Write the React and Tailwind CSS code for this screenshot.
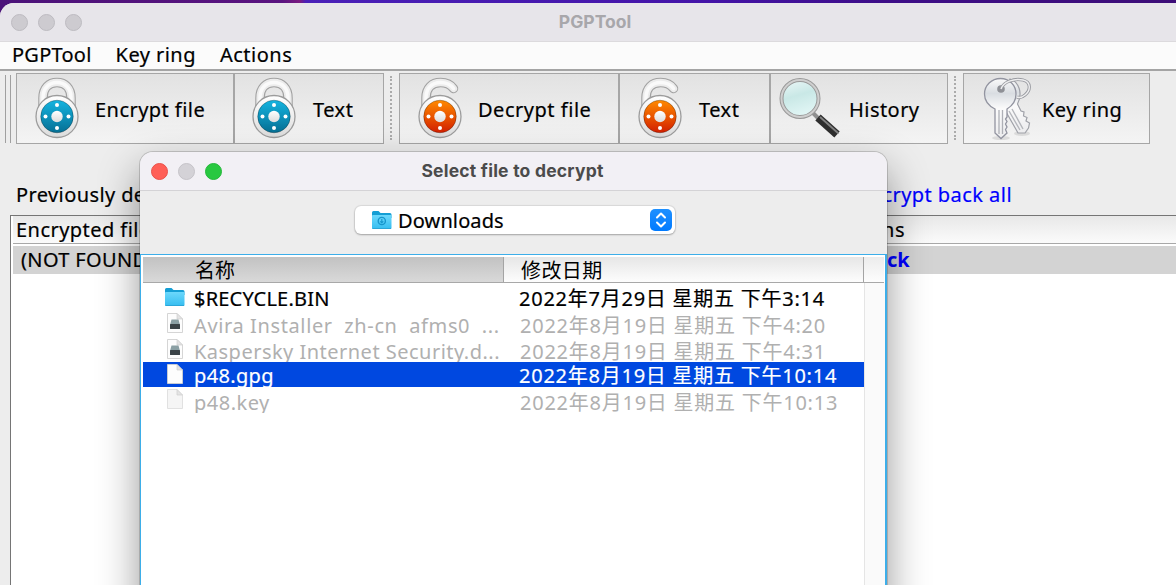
import React from "react";

const LABEL = "whitespace-pre font-['Noto_Sans','Noto_Sans_CJK_SC',sans-serif] text-[20px]";
const HEAVY = "[-webkit-text-stroke:0.2px_currentColor]";

const CLOSED = "M10 36V22C10 12 16 6.500 24 6.500C32 6.500 38 12 38 22V36";
const OPEN = "M10 36V22C10 12 16 6.500 24.500 6.500C31 6.500 35 9 37.500 12.500";

function Padlock({ id, open, top, bottom }) {
  return (
    <svg width="48" height="64" viewBox="0 0 48 64" className="-mt-[1px] shrink-0">
      <defs>
        <linearGradient id={id} x1="0" y1="0" x2="0" y2="1">
          <stop offset="0" stopColor={top} />
          <stop offset="1" stopColor={bottom} />
        </linearGradient>
        <linearGradient id={id + "m"} x1="0" y1="0" x2="0" y2="1">
          <stop offset="0" stopColor="#ffffff" />
          <stop offset="1" stopColor="#dcdcdc" />
        </linearGradient>
      </defs>
      <path d={open ? OPEN : CLOSED} fill="none" stroke="#a2a2a2" strokeWidth="9.500" strokeLinecap="round" />
      <path d={open ? OPEN : CLOSED} fill="none" stroke="#ececec" strokeWidth="7.300" strokeLinecap="round" />
      <path d={open ? OPEN : CLOSED} fill="none" stroke="#fafafa" strokeWidth="3.500" strokeLinecap="round" />
      <circle cx="24" cy="40.500" r="21" fill={`url(#${id}m)`} stroke="#9c9c9c" strokeWidth="1.300" />
      <circle cx="24" cy="40.500" r="16.300" fill={`url(#${id})`} stroke="#00000055" strokeWidth="0.800" />
      <circle cx="24" cy="40.500" r="5.700" fill={`url(#${id}m)`} />
      <circle cx="24" cy="29" r="2" fill="#fff" />
      <circle cx="24" cy="52" r="2" fill="#fff" />
      <circle cx="12.500" cy="40.500" r="2" fill="#fff" />
      <circle cx="35.500" cy="40.500" r="2" fill="#fff" />
    </svg>
  );
}

function Magnifier() {
  return (
    <svg width="64" height="64" viewBox="0 0 64 64" className="shrink-0">
      <defs>
        <linearGradient id="lens" x1="0" y1="0" x2="0.300" y2="1">
          <stop offset="0" stopColor="#edf8f8" />
          <stop offset="0.500" stopColor="#c9e8e6" />
          <stop offset="1" stopColor="#e0f5f4" />
        </linearGradient>
      </defs>
      <path d="M35 36L42 43" stroke="#8f8f8f" strokeWidth="4" />
      <path d="M40 40.500L59 57.500" stroke="#2e2e2e" strokeWidth="8" />
      <path d="M42 40L60.500 56.500" stroke="#828282" strokeWidth="1.800" />
      <circle cx="22" cy="21.500" r="18.500" fill="url(#lens)" stroke="#999" strokeWidth="4" />
      <circle cx="22" cy="21.500" r="18.500" fill="none" stroke="#cfcfcf" strokeWidth="2" />
    </svg>
  );
}

function Keys() {
  return (
    <svg width="56" height="66" viewBox="0 0 56 66" className="mt-px shrink-0">
      <defs>
        <linearGradient id="steel" x1="0" y1="0" x2="0" y2="1">
          <stop offset="0" stopColor="#fafafa" />
          <stop offset="0.250" stopColor="#d9dde2" />
          <stop offset="0.500" stopColor="#fbfbfb" />
          <stop offset="1" stopColor="#ececee" />
        </linearGradient>
      </defs>
      <ellipse cx="21" cy="62" rx="9" ry="2" fill="#00000018" />
      <ellipse cx="42" cy="57.500" rx="8" ry="2.500" fill="#00000018" />
      <path d="M30 3C39 6 43 17 37.500 28L41 35L44 36L43.500 40L47 41.500L46 45L49.500 47L48.500 52L45 57H38L25 34V20Z" fill="url(#steel)" stroke="#9fa1a8" strokeWidth="1.200" />
      <path d="M29 35L40 54M32 33L43 53" stroke="#b4b6bb" strokeWidth="1.400" />
      <path d="M20.500 2.500C29.500 2.500 36 9.500 36 18C36 25 32 30 27 33V41L25.500 43L27 45.500L25.500 48L27 51L25.500 53.500L27 57L21 62.500L15 57V33C9 30 4.500 25 4.500 18C4.500 9.500 11.500 2.500 20.500 2.500Z" fill="url(#steel)" stroke="#9294a0" strokeWidth="1.300" />
      <path d="M19 34V58M22.500 34V58" stroke="#aeb0b6" strokeWidth="1.300" />
      <circle cx="21" cy="13" r="3.800" fill="#8e9096" />
      <path d="M21 13C23 6 34 2 43 4C51 6 51 14 45 19C42 21.500 39 22 37 21" fill="none" stroke="#989aa0" strokeWidth="3.200" />
      <path d="M21 13C23 6 34 2 43 4C51 6 51 14 45 19C42 21.500 39 22 37 21" fill="none" stroke="#eeeeef" strokeWidth="1.400" />
    </svg>
  );
}

function FolderIcon({ id, download }) {
  return (
    <svg width="22" height="20" viewBox="0 0 22 20" className="shrink-0">
      <defs>
        <linearGradient id={id} x1="0" y1="0" x2="0" y2="1">
          <stop offset="0" stopColor="#6cd8fc" />
          <stop offset="1" stopColor="#35bdf0" />
        </linearGradient>
      </defs>
      <path d="M1 2.500Q1 1 2.500 1H7.500L9.500 3H19Q20.500 3 20.500 4.500V8H1Z" fill="#149ed4" />
      <rect x="1" y="5" width="19.500" height="14" rx="1" fill={`url(#${id})`} />
      <path d="M1.500 18.500H20" stroke="#2ba6d8" />
      {download && (
        <g fill="none" stroke="#1796cc" strokeWidth="1.400">
          <circle cx="10.800" cy="11" r="3.600" />
          <path d="M10.800 9V12.500M9.300 11.300L10.800 12.800L12.300 11.300" strokeWidth="1.100" />
        </g>
      )}
    </svg>
  );
}

function FileIcon({ drive, dim }) {
  return (
    <svg width="18" height="20" viewBox="0 0 18 20" className="shrink-0">
      <path d="M1.500 0.500H11L16.500 6V19.500H1.500Z" fill={dim ? "#f5f5f5" : "#fdfdfd"} stroke={dim ? "#dedede" : "#d0d0d0"} strokeWidth="0.900" />
      <path d="M11 0.500V6H16.500Z" fill="#e4e4e4" stroke="#cfcfcf" strokeWidth="0.700" />
      {drive && (
        <g>
          <path d="M5.500 6.500H12.500L14 12H4Z" fill="#8ba0a4" />
          <rect x="4" y="11" width="10" height="5" rx="0.500" fill="#3a4347" />
        </g>
      )}
    </svg>
  );
}

function ToolButton({ icon, label, className, gap, tracking = "tracking-[0.45px]" }) {
  return (
    <div className={`flex h-[71px] shrink-0 items-center border border-[#a6a6a6] bg-linear-to-b from-[#e2e2e2] to-[#f4f4f4] ${className}`}>
      {icon}
      <span className={`${LABEL} ${HEAVY} pt-[2px] text-black ${gap} ${tracking}`}>{label}</span>
    </div>
  );
}

const files = [
  { name: "$RECYCLE.BIN", date: "2022年7月29日 星期五 下午3:14", kind: "folder", row: "h-[26px]", line: "leading-[28px]", track: "tracking-[0.2px]" },
  { name: "Avira Installer  zh-cn  afms0  ...", date: "2022年8月19日 星期五 下午4:20", kind: "drive", dim: true, row: "h-[26px]", line: "leading-[30px]", track: "tracking-[0.62px]" },
  { name: "Kaspersky Internet Security.d...", date: "2022年8月19日 星期五 下午4:31", kind: "drive", dim: true, row: "h-[25px]", line: "leading-[30px]", track: "tracking-[0.48px]" },
  { name: "p48.gpg", date: "2022年8月19日 星期五 下午10:14", kind: "file", selected: true, row: "h-[25px]", line: "leading-[28px]", track: "tracking-[0.35px]" },
  { name: "p48.key", date: "2022年8月19日 星期五 下午10:13", kind: "file", dim: true, row: "h-[26px]", line: "leading-[32px]", track: "tracking-[0.5px]" },
];

function FileRow({ f }) {
  const color = f.selected ? `text-white ${HEAVY}` : f.dim ? "text-[#b0b0b0]" : `text-black ${HEAVY}`;
  return (
    <div className={`flex w-[721px] overflow-hidden ${f.row} ${f.selected ? "bg-[#0048e0]" : ""}`}>
      <div className={`flex w-[360px] pl-[21px] ${f.dim ? "gap-[8px]" : "gap-[8px]"}`}>
        <div className="flex w-[22px] justify-center pt-[2px]">
          {f.kind === "folder" ? <FolderIcon id="rec" /> : <FileIcon drive={f.kind === "drive"} dim={f.dim && f.kind === "file"} />}
        </div>
        <span className={`${LABEL} ${color} ${f.track} ${f.line}`}>{f.name}</span>
      </div>
      <span className={`${LABEL} ${color} tracking-[0.75px] ${f.dim ? "pl-[17px]" : "pl-[16px]"} ${f.line}`}>{f.date}</span>
    </div>
  );
}

function Dialog() {
  return (
    <div className="absolute top-[152px] left-[140px] flex h-[460px] w-[747px] flex-col overflow-hidden rounded-t-[13px] bg-[#ededed] shadow-[0_0_0_1px_rgba(0,0,0,0.16),0_18px_42px_rgba(0,0,0,0.42)]">
      <div className="grid h-[39px] shrink-0 grid-cols-[1fr_auto_1fr] items-center border-b border-[#d4d3d6] bg-[#f2f0f5]">
        <div className="flex gap-[10px] pl-[11px]">
          <i className="h-[17px] w-[17px] rounded-full border border-[#e8504a] bg-[#ff5f57]" />
          <i className="h-[17px] w-[17px] rounded-full border border-[#c5c3c8] bg-[#d4d2d7]" />
          <i className="h-[17px] w-[17px] rounded-full border border-[#24b83b] bg-[#28c840]" />
        </div>
        <span className="-ml-[2px] font-[Inter,sans-serif] text-[17.500px] font-bold tracking-[0.22px] text-[#4b4b4b]">Select file to decrypt</span>
      </div>
      <div className="flex h-[63px] shrink-0 justify-center pt-[15px] pl-[3px]">
        <div className="flex h-[28px] w-[320px] items-center rounded-[6px] bg-white pr-[3px] pl-[16px] shadow-[0_0_1px_1px_rgba(0,0,0,0.08),0_1px_2px_rgba(0,0,0,0.25)]">
          <FolderIcon id="dl" download />
          <span className={`${LABEL} ${HEAVY} ml-[5px] flex-1 pt-px tracking-[0.12px] text-black`}>Downloads</span>
          <span className="flex h-[22px] w-[22px] items-center justify-center rounded-[5px] bg-linear-to-b from-[#1e90ff] to-[#007aff]">
            <svg width="12" height="16" viewBox="0 0 12 16" fill="none" stroke="#fff" strokeWidth="2" strokeLinecap="round" strokeLinejoin="round">
              <path d="M2 5.500L6 1.500L10 5.500M2 10.500L6 14.500L10 10.500" />
            </svg>
          </span>
        </div>
      </div>
      <div className="flex flex-1 flex-col border-t border-r-2 border-l border-[#3daee9] bg-white pt-px pl-[2px]">
        <div className="mt-px mr-px flex h-[26px] shrink-0 border-b border-[#a8a8a8]">
          <div className="w-[361px] border-r border-[#a4a4a4] bg-linear-to-b from-[#c2c2c2] to-[#d9d9d9] pl-[52px]">
            <span className={`${LABEL} leading-[27px] text-black`}>名称</span>
          </div>
          <div className="w-[360px] border-r border-[#a4a4a4] bg-linear-to-b from-[#e6e6e6] to-[#fdfdfd] pl-[17px]">
            <span className={`${LABEL} leading-[27px] tracking-[0.4px] text-black`}>修改日期</span>
          </div>
          <div className="flex-1 bg-linear-to-b from-[#ececec] to-[#fdfdfd]" />
        </div>
        <div className="flex flex-1">
          <div className="flex w-[721px] flex-col pt-[2px]">
            {files.map((f) => <FileRow key={f.name} f={f} />)}
          </div>
          <div className="flex-1 border-l border-[#e5e5e5] bg-[#fafafa]" />
        </div>
      </div>
    </div>
  );
}

export default function App() {
  return (
    <div className="relative h-[585px] w-[1176px] overflow-hidden bg-[linear-gradient(to_right,#4b1279_0%,#5a1480_24%,#7a1a80_25.5%,#4a20b8_26%,#4414a8_60%,#3d0d88_75%,#3d0d78_100%)] pt-[3px]">
      <div className="flex h-[582px] w-[1190px] flex-col overflow-hidden rounded-tl-[14px] bg-[#ededed]">
        <div className="grid h-[39px] shrink-0 grid-cols-[1fr_auto_1fr] items-center border-b border-[#dcdadd] bg-[#e7e5ea]">
          <div className="flex gap-[10px] pl-[11px]">
            <i className="h-[17px] w-[17px] rounded-full border border-[#bdbbc0] bg-[#cdcbd0]" />
            <i className="h-[17px] w-[17px] rounded-full border border-[#bdbbc0] bg-[#cdcbd0]" />
            <i className="h-[17px] w-[17px] rounded-full border border-[#bdbbc0] bg-[#cdcbd0]" />
          </div>
          <span className="font-[Inter,sans-serif] text-[17.500px] font-bold text-[#a8a7ab]">PGPTool</span>
        </div>
        <div className={`flex h-[29px] shrink-0 gap-[24px] border-b-2 border-[#a4a4a4] bg-[#fbfbfb] pl-[12px] text-black ${HEAVY}`}>
          <span className={`${LABEL} leading-[26px] tracking-[0.25px]`}>PGPTool</span>
          <span className={`${LABEL} leading-[26px] tracking-[0.45px]`}>Key ring</span>
          <span className={`${LABEL} leading-[26px] tracking-[0.5px]`}>Actions</span>
        </div>
        <div className="flex h-[75px] shrink-0 pt-[2px] pl-[5px]">
          <div className="mt-[2px] mr-[5px] h-[68px] w-[6px] border-x border-[#a0a0a0]" />
          <ToolButton className="w-[218px] pl-[16px]" gap="ml-[14px]" label="Encrypt file" icon={<Padlock id="b1" top="#14b4e0" bottom="#066f94" />} />
          <ToolButton className="w-[150px] pl-[15px]" gap="ml-[15px]" tracking="tracking-[0.5px]" label="Text" icon={<Padlock id="b2" top="#14b4e0" bottom="#066f94" />} />
          <div className="mt-[3px] mr-[6px] ml-[6px] h-[64px] w-[3px] border-l-2 border-dotted border-[#ababab]" />
          <ToolButton className="w-[220px] pl-[16px]" gap="ml-[14px]" tracking="tracking-[0.52px]" label="Decrypt file" icon={<Padlock id="o1" open top="#ff8a00" bottom="#d32000" />} />
          <ToolButton className="w-[151px] pl-[16px]" gap="ml-[15px]" tracking="tracking-[0.5px]" label="Text" icon={<Padlock id="o2" open top="#ff8a00" bottom="#d32000" />} />
          <ToolButton className="w-[178px] pl-[7px]" gap="ml-[7px]" label="History" icon={<Magnifier />} />
          <div className="mt-[3px] mr-[6px] ml-[6px] h-[64px] w-[3px] border-l-2 border-dotted border-[#ababab]" />
          <ToolButton className="w-[187px] pl-[16px]" gap="ml-[6px]" label="Key ring" icon={<Keys />} />
        </div>
        <div className={`flex h-[69px] shrink-0 pt-[35px] pl-[16px] ${HEAVY}`}>
          <span className={`${LABEL} w-[842px] leading-[28px] tracking-[0.4px] text-black`}>Previously decrypted files:</span>
          <span className={`${LABEL} leading-[28px] tracking-[0.45px] text-[#0000ff]`}>Encrypt back all</span>
        </div>
        <div className="ml-[10px] flex flex-1 flex-col border-t border-l border-[#757575] bg-white">
          <div className={`ml-[2px] flex h-[28px] shrink-0 border-b border-[#a8a8a8] bg-linear-to-b from-[#e8e8e8] to-[#fbfbfb] pl-[3px] text-black ${HEAVY}`}>
            <span className={`${LABEL} w-[817px] leading-[28px] tracking-[0.45px]`}>Encrypted file</span>
            <span className={`${LABEL} leading-[28px] tracking-[0.45px]`}>Actions</span>
          </div>
          <div className="mt-[2px] ml-[2px] flex h-[28px] shrink-0 bg-[#d3d3d3] pl-[8px]">
            <span className={`${LABEL} ${HEAVY} w-[760px] leading-[28px] tracking-[0.35px] text-black`}>(NOT FOUND)</span>
            <span className={`${LABEL} leading-[28px] font-bold text-[#0000ff]`}>Encrypt back</span>
          </div>
        </div>
      </div>
      <Dialog />
    </div>
  );
}
